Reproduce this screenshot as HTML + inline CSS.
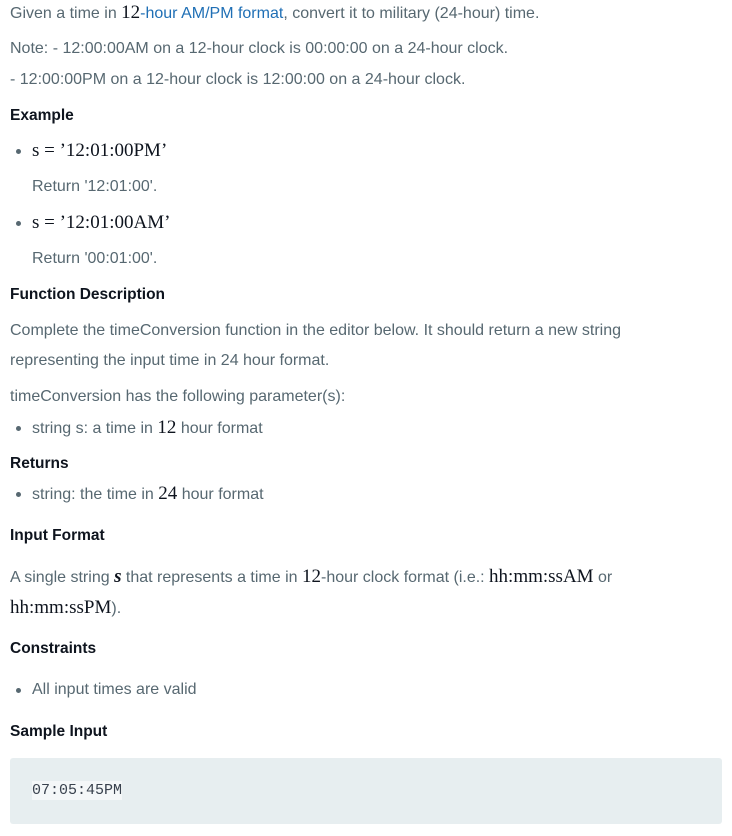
<!DOCTYPE html>
<html><head><meta charset="utf-8"><style>
body{margin:0;width:732px;height:836px;background:#fff;position:relative;overflow:hidden;font-family:"Liberation Sans",sans-serif;font-size:16px;color:#576871}
.l{position:absolute;left:10px;line-height:20px;white-space:nowrap;margin-top:2px}
.h{color:#0e141e;font-weight:bold;font-size:15.5px}
.m{font-family:"Liberation Serif",serif;font-size:19px;color:#0e141e}
.b{position:absolute;left:16px;width:5px;height:5px;border-radius:50%;background:#576871;margin-top:2px}
a{color:#1f6fb5;text-decoration:none}
.code{position:absolute;left:10px;top:758px;width:712px;height:66px;background:#e7eef0;border-radius:3px}
.code span{position:absolute;left:22px;top:23px;font-family:"Liberation Mono",monospace;font-size:15px;color:#39424e;background:#f4f7f8;line-height:19px}
</style></head><body>
<div class="l" style="top:1px">Given a time in <span class="m">12</span><a>-hour AM/PM format</a>, convert it to military (24-hour) time.</div>
<div class="l" style="top:37px">Note: - 12:00:00AM on a 12-hour clock is 00:00:00 on a 24-hour clock.</div>
<div class="l" style="top:68px">- 12:00:00PM on a 12-hour clock is 12:00:00 on a 24-hour clock.</div>
<div class="l h" style="top:104px">Example</div>
<div class="b" style="top:147px"></div>
<div class="l m" style="left:32px;top:139px">s = ’12:01:00PM’</div>
<div class="l" style="left:32px;top:175px">Return '12:01:00'.</div>
<div class="b" style="top:219px"></div>
<div class="l m" style="left:32px;top:211px">s = ’12:01:00AM’</div>
<div class="l" style="left:32px;top:247px">Return '00:01:00'.</div>
<div class="l h" style="top:283px">Function Description</div>
<div class="l" style="top:319px">Complete the timeConversion function in the editor below. It should return a new string</div>
<div class="l" style="top:349px">representing the input time in 24 hour format.</div>
<div class="l" style="top:385px">timeConversion has the following parameter(s):</div>
<div class="b" style="top:424px"></div>
<div class="l" style="left:32px;top:416px">string s: a time in <span class="m">12</span> hour format</div>
<div class="l h" style="top:452px">Returns</div>
<div class="b" style="top:490px"></div>
<div class="l" style="left:32px;top:482px">string: the time in <span class="m">24</span> hour format</div>
<div class="l h" style="top:524px">Input Format</div>
<div class="l" style="top:565px">A single string <span class="m" style="font-style:italic;font-weight:bold">s</span> that represents a time in <span class="m">12</span>-hour clock format (i.e.: <span class="m">hh:mm:ssAM</span> or</div>
<div class="l" style="top:596px"><span class="m">hh:mm:ssPM</span>).</div>
<div class="l h" style="top:637px">Constraints</div>
<div class="b" style="top:686px"></div>
<div class="l" style="left:32px;top:678px">All input times are valid</div>
<div class="l h" style="top:720px">Sample Input</div>
<div class="code"><span>07:05:45PM</span></div>
</body></html>
